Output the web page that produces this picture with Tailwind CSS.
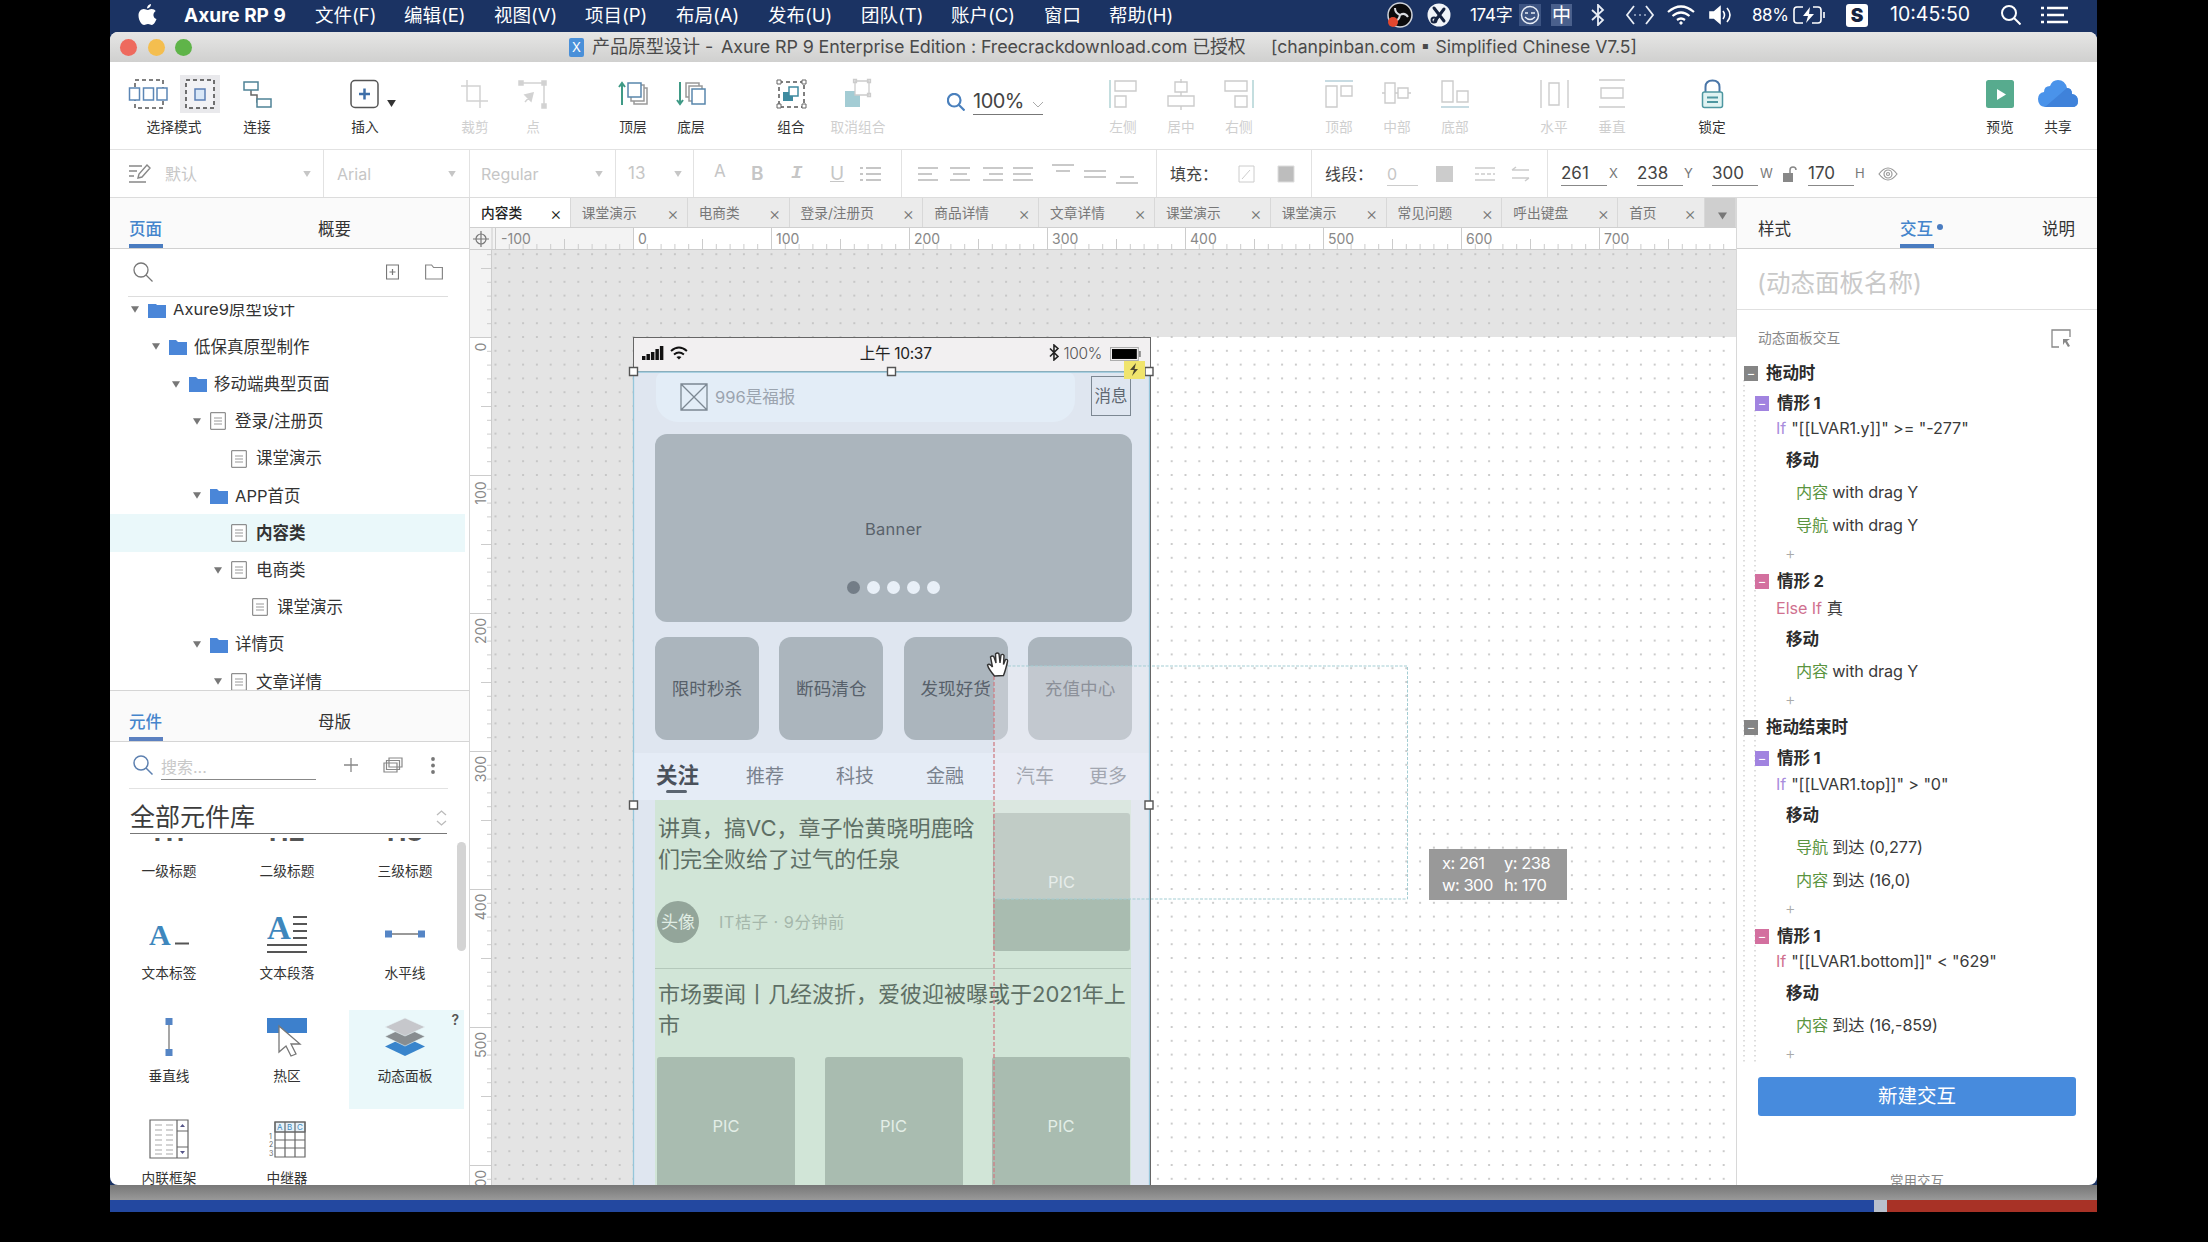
<!DOCTYPE html>
<html lang="zh-CN">

<head>
    <meta charset="UTF-8">
    <meta name="viewport" content="width=device-width, initial-scale=1.0">
    <title>产品原型设计 - Axure RP 9</title>
    <script src="https://cdn.jsdelivr.net/npm/@tailwindcss/browser@4"></script>
</head>

<body class="bg-black w-[2208px] h-[1242px] overflow-hidden font-['Inter','Noto_Sans_CJK_SC',sans-serif] text-[#333]">
    <!-- shared icons -->
    <svg class="hidden">
        <symbol id="folder" viewBox="0 0 18 16">
            <path d="M0 1h7l2 2h9v13H0z" fill="#4a86d8" />
        </symbol>
        <symbol id="page" viewBox="0 0 16 18">
            <path d="M.7.7h14.6v16.6H.7z" fill="#fff" stroke="#777" />
            <path d="M4 6h8M4 9h8M4 12h8" stroke="#999" />
        </symbol>
        <symbol id="caret" viewBox="0 0 10 8">
            <path d="M0 0h10L5 8z" fill="currentColor" />
        </symbol>
        <symbol id="search" viewBox="0 0 20 20" fill="none" stroke="currentColor">
            <circle cx="8" cy="8" r="7" />
            <path d="M13 13l6.5 6.5" />
        </symbol>
    </svg>

    <div class="ml-[110px] w-[1987px] h-[1212px] flex flex-col bg-[#1b3363]">
        <!-- Menu bar -->
        <header class="h-8 pb-[2px] shrink-0 flex items-center text-white text-[18.5px] leading-none whitespace-nowrap">
            <svg class="ml-7 w-[19px] h-[22px]" viewBox="0 0 19 22" fill="#fff">
                <path d="M13 0c.2 2-1.600 4.400-4 4.500C8.800 2.300 10.800.3 13 0zM9.500 6c1 0 2.300-1.200 4.300-1.100 1.700.1 3 .8 3.900 2-3.400 2.200-2.800 6.800.8 8.200-1 2.800-2.700 5.800-4.600 5.900-1.500 0-2-.9-3.900-.9s-2.400.9-3.900.9C3.500 21 .5 16 .5 11.500.5 7.500 3 5.200 5.600 5.100 7.300 5 8.600 6 9.500 6z" />
            </svg>
            <b class="ml-[27px] w-[131px] text-[19px]">Axure RP 9</b>
            <span class="w-[89px]">文件(F)</span>
            <span class="w-[90px]">编辑(E)</span>
            <span class="w-[91px]">视图(V)</span>
            <span class="w-[91px]">项目(P)</span>
            <span class="w-[92px]">布局(A)</span>
            <span class="w-[93px]">发布(U)</span>
            <span class="w-[90px]">团队(T)</span>
            <span class="w-[93px]">账户(C)</span>
            <span class="w-[65px]">窗口</span>
            <span class="w-[278px]">帮助(H)</span>
            <svg class="w-[26px] h-[26px]" viewBox="0 0 26 26">
                <circle cx="13" cy="13" r="12" fill="#0b0b0d" stroke="#cfd3da" stroke-width="1.500" />
                <path d="M8 6q0 5 5 7q5-3 8 2M13 13q-1 6-6 6" fill="none" stroke="#d9dbe0" stroke-width="2" />
                <circle cx="6" cy="20" r="5" fill="#e2472f" />
            </svg>
            <svg class="ml-[14px] w-6 h-6" viewBox="0 0 24 24">
                <circle cx="12" cy="12" r="11.500" fill="#f1f4f8" />
                <path d="M7 5l10 13M17 6L8 18" stroke="#16233f" stroke-width="3" stroke-linecap="round" />
                <circle cx="7" cy="17" r="2.500" fill="none" stroke="#16233f" stroke-width="2" />
            </svg>
            <span class="ml-[19px] w-[49px] text-[17px] tracking-[-0.300px]">174字</span>
            <svg class="w-[22px] h-[22px]" viewBox="0 0 22 22" fill="none" stroke="#e8edf5" stroke-width="1.500">
                <path d="M0 0h22v22H0z" fill="#3d5482" stroke="none" />
                <circle cx="11" cy="11" r="8.500" />
                <path d="M6 9h3M12 9h4M6 13q5 5 10 0" />
            </svg>
            <span class="ml-[10px] w-[21px] h-[22px] bg-[#4a608c] flex items-center justify-center text-[19px]">中</span>
            <svg class="ml-[19px] w-[14px] h-[22px]" viewBox="0 0 14 22" fill="none" stroke="#e8edf5" stroke-width="1.800">
                <path d="M1 6l11 10-5 5V1l5 5L1 16" />
            </svg>
            <svg class="ml-[20px] w-[30px] h-5" viewBox="0 0 30 20" fill="none" stroke="#e8edf5" stroke-width="1.800">
                <path d="M9 1L2 10l7 9M21 1l7 9-7 9" />
                <path d="M9 10h13" stroke-dasharray="2 3" stroke="#7f90b0" />
            </svg>
            <svg class="ml-[12px] w-7 h-5" viewBox="0 0 28 20" fill="none" stroke="#fff" stroke-width="2.200">
                <path d="M1 7q13-11 26 0M5.500 11q8.500-7 17 0M10 15q4-3 8 0" />
                <circle cx="14" cy="18" r="1.200" fill="#fff" stroke-width="1" />
            </svg>
            <svg class="ml-[14px] w-6 h-5" viewBox="0 0 24 20" fill="none" stroke="#fff" stroke-width="1.600">
                <path d="M1 7h4l6-5v16l-6-5H1z" fill="#fff" />
                <path d="M14 6q3 4 0 8M18 3q6 7 0 14" />
            </svg>
            <span class="ml-[19px] w-[41px] text-[17px] tracking-[-0.400px]">88%</span>
            <svg class="w-[33px] h-[18px]" viewBox="0 0 33 18" fill="none" stroke="#fff" stroke-width="1.600">
                <path d="M10 1H4Q1 1 1 4v10q0 3 3 3h6M20 1h5q3 0 3 3v10q0 3-3 3h-6M31 6v6" />
                <path d="M17 1l-7 9h5l-2 7 8-9h-5z" fill="#fff" stroke="none" />
            </svg>
            <span class="ml-[20px] w-[22px] h-[23px] rounded-[3px] bg-white text-[#16233f] font-black flex items-center justify-center text-[19px]">S</span>
            <span class="ml-[22px] w-[111px] text-[19.500px]">10:45:50</span>
            <svg class="w-[20px] h-[20px] stroke-2">
                <use href="#search" />
            </svg>
            <svg class="ml-[20px] w-[27px] h-[18px]" viewBox="0 0 27 18" stroke="#fff" stroke-width="2.400">
                <path d="M0 2h3M6 2h21M0 9h3M6 9h17M0 16h3M6 16h21" />
            </svg>
        </header>

        <!-- Window -->
        <div class="h-[1153px] shrink-0 bg-white rounded-lg overflow-hidden flex flex-col">
            <div class="h-[30px] shrink-0 bg-linear-to-b from-[#e6e6e5] to-[#d0d0cf] flex items-center whitespace-nowrap text-[17.600px] leading-none text-[#4a4a4a]">
                <i class="ml-[10px] size-[17px] rounded-full bg-[#ee6a5e]"></i>
                <i class="ml-[11px] size-[17px] rounded-full bg-[#f4be4f]"></i>
                <i class="ml-[10px] size-[17px] rounded-full bg-[#5fb449]"></i>
                <span class="ml-[377px] w-[15px] h-[19px] bg-[#4a90d9] rounded-[2px] text-white text-[13px] flex items-center justify-center">X</span>
                <span class="ml-[8px] w-[129px] text-[18px]">产品原型设计 -</span>
                <span class="w-[550px] text-[17.900px] tracking-[-0.100px]">Axure RP 9 Enterprise Edition : Freecrackdownload.com 已授权</span>
                <span>[chanpinban.com ▪ Simplified Chinese V7.5]</span>
            </div>

            <!-- Main toolbar -->
            <div class="h-[88px] shrink-0 pl-[18px] pt-[13px] flex border-b border-[#e2e2e2] text-[13.700px] leading-none text-center whitespace-nowrap">
                <div class="w-[92px] flex flex-col items-center">
                    <div class="flex gap-3 w-full">
                        <svg class="w-10 h-[38px]" viewBox="0 0 40 38" fill="none">
                            <path d="M7 5h28v28H7z" stroke="#555" stroke-width="1.500" stroke-dasharray="4 3" />
                            <path d="M1.500 13h10v12h-10zM15.500 13h10v12h-10zM29 13h10v12H29z" fill="#fff" stroke="#5b86b5" stroke-width="1.500" />
                        </svg>
                        <svg class="w-10 h-[38px] bg-[#e9e9ec]" viewBox="0 0 40 38" fill="none">
                            <path d="M6 5h28v28H6z" fill="#f2f2f5" stroke="#444" stroke-width="1.500" stroke-dasharray="4 3" />
                            <path d="M15 14h10v11H15z" fill="#d9e7f7" stroke="#5b7fb5" stroke-width="1.500" />
                        </svg>
                    </div>
                    <span class="mt-2">选择模式</span>
                </div>
                <div class="ml-2 w-[58px] flex flex-col items-center">
                    <svg class="w-10 h-[38px]" viewBox="0 0 40 38" fill="none" stroke-width="1.500">
                        <path d="M14 15v5h6v7h6" stroke="#666" />
                        <path d="M7 7h14v8H7zM20 24h14v8H20z" fill="#fff" stroke="#4f8296" />
                    </svg>
                    <span class="mt-2">连接</span>
                </div>
                <div class="ml-[50px] w-[58px] flex flex-col items-center relative">
                    <svg class="w-10 h-[38px]" viewBox="0 0 40 38" fill="none">
                        <rect x="6" y="5.500" width="27" height="27" rx="4" stroke="#555" stroke-width="1.500" />
                        <path d="M14 19h11M19.500 13.500v11" stroke="#3f6fa8" stroke-width="2.500" />
                    </svg>
                    <svg class="absolute left-[51px] top-[25px] w-[9px] h-[7px] text-[#333]"><use href="#caret" /></svg>
                    <span class="mt-2">插入</span>
                </div>
                <div class="ml-[52px] w-[58px] flex flex-col items-center text-[#cfcfcf]">
                    <svg class="w-10 h-[38px]" viewBox="0 0 40 38" fill="none" stroke="#d2d2d2" stroke-width="1.500">
                        <path d="M6 11h19v22M12 5v21h21" />
                    </svg>
                    <span class="mt-2">裁剪</span>
                </div>
                <div class="w-[58px] flex flex-col items-center text-[#cfcfcf]">
                    <svg class="w-10 h-[38px]" viewBox="0 0 40 38" fill="none" stroke="#d2d2d2" stroke-width="1.500">
                        <path d="M9 8h22v22" />
                        <path d="M6 6h4v4H6zM29 6h4v4h-4zM29 29h4v4h-4zM12 27l8-9M20 18l-8 2 6 6z" fill="#d2d2d2" />
                    </svg>
                    <span class="mt-2">点</span>
                </div>
                <div class="ml-[42px] w-[58px] flex flex-col items-center">
                    <svg class="w-10 h-[38px]" viewBox="0 0 40 38" fill="none" stroke-width="1.500">
                        <path d="M9 30V8M6 12l3-4 3 4" stroke="#3f9a86" stroke-width="2" />
                        <path d="M21 13h13v16H21z" fill="#fff" stroke="#999" />
                        <path d="M18 10h13v16H18z" fill="#fff" stroke="#999" />
                        <path d="M15 8h13v14H15z" fill="#fff" stroke="#5886ac" />
                    </svg>
                    <span class="mt-2">顶层</span>
                </div>
                <div class="w-[58px] flex flex-col items-center">
                    <svg class="w-10 h-[38px]" viewBox="0 0 40 38" fill="none" stroke-width="1.500">
                        <path d="M9 7v22M6 25l3 4 3-4" stroke="#3f9a86" stroke-width="2" />
                        <path d="M15 8h13v14H15z" fill="#fff" stroke="#999" />
                        <path d="M18 11h13v15H18z" fill="#fff" stroke="#999" />
                        <path d="M21 14h13v15H21z" fill="#fff" stroke="#5886ac" />
                    </svg>
                    <span class="mt-2">底层</span>
                </div>
                <div class="ml-[42px] w-[58px] flex flex-col items-center">
                    <svg class="w-10 h-[38px]" viewBox="0 0 40 38" fill="none" stroke-width="1.500">
                        <path d="M8 7h25v25H8z" stroke="#555" stroke-dasharray="4 3" />
                        <path d="M6 5h4v4H6zM31 5h4v4h-4zM6 29h4v4H6zM31 29h4v4h-4z" fill="#fff" stroke="#666" stroke-width="1" />
                        <path d="M12 17h10v9H12z" fill="#3f8ba0" />
                        <path d="M18 12h9v9h-9z" fill="#fff" stroke="#3f8ba0" />
                    </svg>
                    <span class="mt-2">组合</span>
                </div>
                <div class="w-[76px] flex flex-col items-center text-[#cfcfcf]">
                    <svg class="w-10 h-[38px]" viewBox="0 0 40 38" fill="none" stroke-width="1.300">
                        <path d="M7 16h15v16H7z" fill="#a3ccd4" />
                        <path d="M17 6h14v14H17z" fill="#fff" stroke="#ccc" />
                        <path d="M15.500 4.500h3v3h-3zM29.500 4.500h3v3h-3zM29.500 18.500h3v3h-3z" stroke="#ccc" />
                    </svg>
                    <span class="mt-2">取消组合</span>
                </div>
                <div class="ml-[51px] w-[96px] h-[40px] pt-[2px] flex items-end text-[#444]">
                    <svg class="mb-[4px] w-[18px] h-[18px] text-[#4a80bd] stroke-[2.400]"><use href="#search" /></svg>
                    <div class="ml-2 flex-1 h-[27px] flex items-center justify-between border-b border-[#777]">
                        <span class="text-[20px] tracking-[-0.500px]">100%</span>
                        <svg class="mt-2 w-[10px] h-[8px]" viewBox="0 0 10 8" fill="none" stroke="#aaa"><path d="M0 1l5 5 5-5" /></svg>
                    </div>
                </div>
                <div class="ml-[51px] w-[174px] flex text-[#cfcfcf]">
                    <div class="flex-1 flex flex-col items-center">
                        <svg class="w-10 h-[38px]" viewBox="0 0 40 38" fill="none" stroke="#ccc" stroke-width="1.400"><path d="M7 5v28" stroke="#abd0d2" /><path d="M12 6h21v10H12zM12 21h11v11H12z" /></svg>
                        <span class="mt-2">左侧</span>
                    </div>
                    <div class="flex-1 flex flex-col items-center">
                        <svg class="w-10 h-[38px]" viewBox="0 0 40 38" fill="none" stroke="#ccc" stroke-width="1.400"><path d="M20 4v4M20 17v4M20 31v4" /><path d="M14 7h12v10H14zM7 21h26v10H7z" /></svg>
                        <span class="mt-2">居中</span>
                    </div>
                    <div class="flex-1 flex flex-col items-center">
                        <svg class="w-10 h-[38px]" viewBox="0 0 40 38" fill="none" stroke="#ccc" stroke-width="1.400"><path d="M34 5v28" stroke="#abd0d2" /><path d="M6 6h22v10H6zM16 21h12v11H16z" /></svg>
                        <span class="mt-2">右侧</span>
                    </div>
                </div>
                <div class="ml-[42px] w-[174px] flex text-[#cfcfcf]">
                    <div class="flex-1 flex flex-col items-center">
                        <svg class="w-10 h-[38px]" viewBox="0 0 40 38" fill="none" stroke="#ccc" stroke-width="1.400"><path d="M6 6h28" stroke="#b5cfd8" /><path d="M7 11h11v21H7zM22 11h11v10H22z" /></svg>
                        <span class="mt-2">顶部</span>
                    </div>
                    <div class="flex-1 flex flex-col items-center">
                        <svg class="w-10 h-[38px]" viewBox="0 0 40 38" fill="none" stroke="#ccc" stroke-width="1.400"><path d="M5 18h3M18 18h3M31 18h3" /><path d="M8 8h10v20H8zM21 13h10v10H21z" /></svg>
                        <span class="mt-2">中部</span>
                    </div>
                    <div class="flex-1 flex flex-col items-center">
                        <svg class="w-10 h-[38px]" viewBox="0 0 40 38" fill="none" stroke="#ccc" stroke-width="1.400"><path d="M6 32h28" stroke="#b5cfd8" /><path d="M7 6h11v21H7zM22 16h11v11H22z" /></svg>
                        <span class="mt-2">底部</span>
                    </div>
                </div>
                <div class="ml-[41px] w-[116px] flex text-[#cfcfcf]">
                    <div class="flex-1 flex flex-col items-center">
                        <svg class="w-10 h-[38px]" viewBox="0 0 40 38" fill="none" stroke="#ccc" stroke-width="1.400"><path d="M7 5v28M34 5v28M15 8h10v22H15z" /></svg>
                        <span class="mt-2">水平</span>
                    </div>
                    <div class="flex-1 flex flex-col items-center">
                        <svg class="w-10 h-[38px]" viewBox="0 0 40 38" fill="none" stroke="#ccc" stroke-width="1.400"><path d="M7 5h26M7 32h26M9 13h22v10H9z" /></svg>
                        <span class="mt-2">垂直</span>
                    </div>
                </div>
                <div class="ml-[42px] w-[58px] flex flex-col items-center">
                    <svg class="w-10 h-[38px]" viewBox="0 0 40 38" fill="none">
                        <path d="M13.500 17v-5q0-6.500 7-6.500t7 6.500v5" stroke="#4a76a8" stroke-width="2" />
                        <rect x="10.500" y="17" width="20" height="15.500" rx="2" fill="#e0f3f2" stroke="#4d97a0" stroke-width="1.500" />
                        <path d="M15 22.500h11M15 27h11" stroke="#4d97a0" stroke-width="1.800" />
                    </svg>
                    <span class="mt-2">锁定</span>
                </div>
                <div class="ml-[230px] w-[58px] flex flex-col items-center">
                    <svg class="w-10 h-[38px]" viewBox="0 0 40 38">
                        <rect x="6" y="5" width="28" height="28" rx="2.500" fill="#57ab8e" />
                        <path d="M17 14v11l9-5.500z" fill="#fff" />
                    </svg>
                    <span class="mt-2">预览</span>
                </div>
                <div class="w-[58px] flex flex-col items-center">
                    <svg class="w-[44px] h-[38px]" viewBox="0 0 44 38">
                        <path d="M9 32q-7-1-7-8 0-6 6-7 0-6 6-6 2-6 8-6 7 0 9 8 5 0 5 6 6 1 6 7 0 6-6 6z" fill="#4a93ea" />
                        <path d="M9 32L31 13q5 0 5 6 6 1 6 7 0 6-6 6z" fill="#3f82da" />
                    </svg>
                    <span class="mt-2">共享</span>
                </div>
            </div>

            <!-- Format bar -->
            <div class="h-[48px] shrink-0 flex border-b border-[#dcdcdc] text-[16px] leading-none text-[#c6c6c6] whitespace-nowrap">
                <div class="w-[214px] flex items-center border-r border-[#e2e2e2]">
                    <svg class="ml-[19px] w-[22px] h-5" viewBox="0 0 22 20" fill="none" stroke="#888" stroke-width="1.400">
                        <path d="M0 2h13M0 7h8M0 12h5M0 18h17M9 14l1-4 8-9 3 3-8 9z" />
                    </svg>
                    <span class="ml-[14px] w-[138px]">默认</span>
                    <svg class="w-2 h-1.5"><use href="#caret" /></svg>
                </div>
                <div class="w-[146px] flex items-center border-r border-[#e2e2e2]">
                    <span class="ml-[13px] w-[111px]">Arial</span>
                    <svg class="w-2 h-1.5"><use href="#caret" /></svg>
                </div>
                <div class="w-[146px] flex items-center border-r border-[#e2e2e2]">
                    <span class="ml-[11px] w-[114px]">Regular</span>
                    <svg class="w-2 h-1.5"><use href="#caret" /></svg>
                </div>
                <div class="w-[78px] flex items-center border-r border-[#e2e2e2]">
                    <span class="ml-[12px] w-[46px] text-[17px]">13</span>
                    <svg class="w-2 h-1.5"><use href="#caret" /></svg>
                </div>
                <div class="w-[208px] flex items-center border-r border-[#e2e2e2] text-[19px]">
                    <span class="ml-[20px] w-[37px] text-[17px] pb-1">A</span>
                    <b class="w-[40px] font-semibold">B</b>
                    <i class="w-[39px] font-['Liberation_Mono'] font-bold">I</i>
                    <u class="w-[30px]">U</u>
                    <svg class="w-[21px] h-4" viewBox="0 0 21 16" stroke="#c6c6c6" stroke-width="2"><path d="M0 2h3M6 2h15M0 8h3M6 8h15M0 14h3M6 14h15" /></svg>
                </div>
                <div class="w-[255px] flex items-center border-r border-[#e2e2e2]">
                    <svg class="ml-[16px] w-[220px] h-[22px]" viewBox="0 0 220 22" fill="none" stroke="#c9c9c9" stroke-width="1.800">
                        <path d="M0 5h20M0 11h14M0 17h20M32 5h20M35 11h14M32 17h20M65 5h20M71 11h14M65 17h20M95 5h20M95 11h18M95 17h20" />
                        <path d="M134 2h22M138 8h14M166 8h22M166 14h22M202 14h14M198 20h22" />
                    </svg>
                </div>
                <div class="w-[155px] flex items-center border-r border-[#e2e2e2]">
                    <span class="ml-[13px] w-[68px] text-[#444]">填充：</span>
                    <svg class="w-[58px] h-[18px]" viewBox="0 0 58 18"><path d="M1 1h15v16H1zM4 14l8-9" fill="none" stroke="#ccc" /><path d="M40 1h16v16H40z" fill="#bdbdbd" stroke="#ddd" /></svg>
                </div>
                <div class="w-[236px] flex items-center border-r border-[#e2e2e2]">
                    <span class="ml-[13px] w-[62px] text-[#444]">线段：</span>
                    <span class="w-[31px] h-[25px] pt-[5px] border-b border-[#ccc]">0</span>
                    <svg class="ml-[18px] w-[94px] h-[18px]" viewBox="0 0 94 18" stroke="#ccc" stroke-width="1.500"><path d="M0 1h17v16H0z" fill="#ccc" stroke="none" /><path d="M39 3h20M39 15h20" /><path d="M39 9h20" stroke-dasharray="4 2" /><path d="M76 5h17M76 5l4-3M76 13h17M93 13l-4 3" /></svg>
                </div>
                <div class="flex items-center text-[#444] text-[17px]">
                    <span class="ml-[13px] w-[46px] h-[25px] pt-1 border-b border-[#888]">261</span>
                    <span class="ml-[2px] w-[28px] text-[13px] text-[#777]">X</span>
                    <span class="w-[46px] h-[25px] pt-1 border-b border-[#888]">238</span>
                    <span class="ml-[1px] w-[28px] text-[13px] text-[#777]">Y</span>
                    <span class="w-[46px] h-[25px] pt-1 border-b border-[#888]">300</span>
                    <span class="ml-[2px] w-[23px] text-[13px] text-[#777]">W</span>
                    <svg class="w-[14px] h-4" viewBox="0 0 14 16" fill="none" stroke="#888" stroke-width="1.500"><path d="M0 7h10v9H0z" fill="#888" stroke="none" /><path d="M7 7V4q0-3 3-3t3 3" /></svg>
                    <span class="ml-[11px] w-[46px] h-[25px] pt-1 border-b border-[#888]">170</span>
                    <span class="ml-[1px] w-[23px] text-[13px] text-[#777]">H</span>
                    <svg class="w-5 h-[14px]" viewBox="0 0 20 14" fill="none" stroke="#999" stroke-width="1.200"><path d="M1 7q9-12 18 0-9 12-18 0z" /><circle cx="10" cy="7" r="4" /><circle cx="10" cy="7" r="1.500" /></svg>
                </div>
            </div>

            <div class="flex flex-1 min-h-0">
                <!-- Left panels -->
                <aside class="w-[360px] shrink-0 flex flex-col border-r border-[#d8d8d8] leading-none">
                    <div class="h-[51px] shrink-0 flex pl-[19px] bg-[#fafafa] border-b border-[#d0d0d0] text-[16.500px]">
                        <span class="w-[34px] pt-[23px] border-b-4 border-[#4a7cc0] text-[#4585cc] font-medium">页面</span>
                        <span class="ml-[155px] pt-[23px]">概要</span>
                    </div>
                    <div class="h-[48px] pb-[2px] shrink-0 ml-[18px] w-[320px] flex items-center border-b border-[#ddd] text-[#777]">
                        <svg class="ml-[5px] w-5 h-5 stroke-[1.300]"><use href="#search" /></svg>
                        <svg class="ml-[233px] w-[13px] h-4" viewBox="0 0 13 16" fill="none" stroke="#777" stroke-width="1.200"><path d="M.5 1h12v14H.5zM3.500 8h6M6.500 5v6" /></svg>
                        <svg class="ml-[26px] w-[18px] h-4" viewBox="0 0 18 16" fill="none" stroke="#888" stroke-width="1.200"><path d="M.6 1h6l2 2.500h8.800V15H.6z" /></svg>
                    </div>
                    <div class="mt-[7px] flex-1 min-h-0 overflow-hidden text-[16.500px] [&>div]:h-[37.240px] [&>div]:flex [&>div]:items-center [&_.c]:w-2 [&_.c]:h-[7px] [&_.c]:mr-[13px] [&_.c]:text-[#777] [&_.f]:w-[18px] [&_.f]:h-4 [&_.f]:mr-[7px] [&_.p]:w-4 [&_.p]:h-[18px] [&_.p]:mr-[9px]">
                        <div class="pl-[21px] -mt-[13px]"><svg class="c"><use href="#caret" /></svg><svg class="f -ml-1"><use href="#folder" /></svg>Axure9原型设计</div>
                        <div class="pl-[42px]"><svg class="c"><use href="#caret" /></svg><svg class="f -ml-1"><use href="#folder" /></svg>低保真原型制作</div>
                        <div class="pl-[62px]"><svg class="c"><use href="#caret" /></svg><svg class="f -ml-1"><use href="#folder" /></svg>移动端典型页面</div>
                        <div class="pl-[83px]"><svg class="c"><use href="#caret" /></svg><svg class="p -ml-1"><use href="#page" /></svg>登录/注册页</div>
                        <div class="pl-[121px]"><svg class="p"><use href="#page" /></svg>课堂演示</div>
                        <div class="pl-[83px]"><svg class="c"><use href="#caret" /></svg><svg class="f -ml-1"><use href="#folder" /></svg>APP首页</div>
                        <div class="pl-[121px] mr-[4px] bg-[#eaf8fa] font-bold"><svg class="p"><use href="#page" /></svg>内容类</div>
                        <div class="pl-[104px]"><svg class="c"><use href="#caret" /></svg><svg class="p -ml-1"><use href="#page" /></svg>电商类</div>
                        <div class="pl-[142px]"><svg class="p"><use href="#page" /></svg>课堂演示</div>
                        <div class="pl-[83px]"><svg class="c"><use href="#caret" /></svg><svg class="f -ml-1"><use href="#folder" /></svg>详情页</div>
                        <div class="pl-[104px]"><svg class="c"><use href="#caret" /></svg><svg class="p -ml-1"><use href="#page" /></svg>文章详情</div>
                    </div>
                    <div class="h-[52px] shrink-0 flex pl-[19px] bg-[#fafafa] border-y border-[#d5d5d5] text-[16.500px]">
                        <span class="w-[34px] pt-[23px] border-b-4 border-[#5b80c0] text-[#4585cc] font-medium">元件</span>
                        <span class="ml-[155px] pt-[23px]">母版</span>
                    </div>
                    <div class="h-[47px] shrink-0 ml-[19px] w-[319px] flex items-center border-b border-[#e2e2e2] text-[#5d80b0]">
                        <svg class="ml-1 w-5 h-5 stroke-[1.500]"><use href="#search" /></svg>
                        <span class="ml-2 mt-1 w-[155px] h-[26px] pt-[5px] border-b border-[#888] text-[16px] text-[#c8c8c8]">搜索...</span>
                        <svg class="ml-[28px] w-[14px] h-[14px]" viewBox="0 0 14 14" stroke="#888" stroke-width="1.300"><path d="M0 7h14M7 0v14" /></svg>
                        <svg class="ml-[25px] w-5 h-4" viewBox="0 0 20 16" fill="#fff" stroke="#888" stroke-width="1.200"><path d="M6 1h13v9H6zM3.500 3.500h13v9h-13zM1 6h13v9H1z" /></svg>
                        <svg class="ml-[28px] w-1 h-[17px]" viewBox="0 0 4 17" fill="#777"><circle cx="2" cy="2" r="1.900" /><circle cx="2" cy="8.500" r="1.900" /><circle cx="2" cy="15" r="1.900" /></svg>
                    </div>
                    <div class="h-[45px] shrink-0 ml-[20px] w-[317px] pt-[13px] flex items-center justify-between border-b border-[#777] text-[25px] text-[#3c3c3c]">
                        全部元件库
                        <svg class="w-[11px] h-[18px]" viewBox="0 0 11 18" fill="none" stroke="#bbb" stroke-width="1.300"><path d="M1 6l4.500-4L10 6M1 12l4.500 4L10 12" /></svg>
                    </div>
                    <div class="relative mt-[4px] h-[347px] shrink-0 overflow-hidden">
                        <div class="-mt-[36px] w-[354px] grid grid-cols-3 auto-rows-[102.300px] text-[13.700px] [&>div]:pt-[10px] [&>div]:flex [&>div]:flex-col [&>div]:items-center [&_svg]:w-10 [&_svg]:h-[40px] [&_span]:mt-[13px] [&_b]:text-[#555]">
                            <div><b class="h-[40px] pt-[7px] text-[26px] leading-none">H1</b><span>一级标题</span></div>
                            <div><b class="h-[40px] pt-[7px] text-[26px] leading-none">H2</b><span>二级标题</span></div>
                            <div><b class="h-[40px] pt-[7px] text-[26px] leading-none">H3</b><span>三级标题</span></div>
                            <div>
                                <svg viewBox="0 0 40 40"><text x="0" y="31" font-family="Liberation Serif" font-weight="bold" font-size="30" fill="#3e87bd">A</text><path d="M26 29.500h14" stroke="#555" stroke-width="2" /></svg>
                                <span>文本标签</span>
                            </div>
                            <div>
                                <svg viewBox="0 0 40 40"><text x="0" y="25" font-family="Liberation Serif" font-weight="bold" font-size="33" fill="#3e87bd">A</text><path d="M26 3h14M26 10h14M26 17h14M26 24h14M0 31h40M0 38h40" stroke="#555" stroke-width="2" /></svg>
                                <span>文本段落</span>
                            </div>
                            <div>
                                <svg viewBox="0 0 40 40"><path d="M3 20h34" stroke="#777" stroke-width="1.300" /><path d="M0 16.500h7v7H0zM33 16.500h7v7h-7z" fill="#5585c5" /></svg>
                                <span>水平线</span>
                            </div>
                            <div>
                                <svg viewBox="0 0 40 40"><path d="M20 3v34" stroke="#777" stroke-width="1.300" /><path d="M16.500 1h7v7h-7zM16.500 32h7v7h-7z" fill="#5585c5" /></svg>
                                <span>垂直线</span>
                            </div>
                            <div>
                                <svg viewBox="0 0 40 40"><path d="M0 1h40v15H0z" fill="#3d80cc" /><path d="M12 9v26l7-6 5 10 5-2-5-10h9z" fill="#fff" stroke="#777" stroke-width="1.300" /></svg>
                                <span>热区</span>
                            </div>
                            <div class="relative">
                                <div class="absolute left-[3px] top-[3px] right-0 bottom-0 bg-[#eaf8fa]"></div>
                                <b class="absolute right-[5px] top-[6px] text-[14px] font-semibold">?</b>
                                <svg class="relative" viewBox="0 0 40 40"><path d="M20 20l20 9.500L20 39 0 29.500z" fill="#3985cc" /><path d="M20 10l20 9.500L20 29 0 19.500z" fill="#888d90" stroke="#eaf7f9" stroke-width=".6" /><path d="M20 1l20 9L20 19 0 10z" fill="#c6c7cb" stroke="#eaf7f9" stroke-width=".6" /></svg>
                                <span class="relative">动态面板</span>
                            </div>
                            <div>
                                <svg viewBox="0 0 40 40" fill="none" stroke="#666" stroke-width="1.200"><path d="M1 1h38v38H1zM28 1v38M28 12h11M28 28h11" /><path d="M6 6h7M6 11h7M6 16h7M6 21h7M6 26h7M6 31h7M6 35h7M17 6h7M17 11h7M17 16h7M17 21h7M17 26h7M17 31h7M17 35h7" stroke="#aaa" /><path d="M31 8l2.500-3L36 8zM31 32l2.500 3 2.500-3z" fill="#558" stroke="none" /></svg>
                                <span>内联框架</span>
                            </div>
                            <div>
                                <svg viewBox="0 0 40 40" fill="none" stroke="#666" stroke-width="1.200"><path d="M8 3h30v10H8z" fill="#e6f1f8" /><path d="M8 3h30v35H8zM18 3v35M28 3v35M8 13h30M8 21h30M8 29h30" /><g font-size="8" fill="#3e87bd" stroke="none"><text x="10" y="11">A</text><text x="20" y="11">B</text><text x="30" y="11">C</text></g><g font-size="7" fill="#666" stroke="none"><text x="2" y="20">1</text><text x="2" y="28">2</text><text x="2" y="37">3</text></g></svg>
                                <span>中继器</span>
                            </div>
                        </div>
                        <div class="absolute left-[347px] top-1 w-[9px] h-[109px] rounded-full bg-[#d4d4d4]"></div>
                    </div>
                </aside>

                <!-- Editor -->
                <main class="w-[1267px] shrink-0 flex flex-col border-r border-[#d8d8d8]">
                    <div class="h-[30px] shrink-0 flex bg-[#ebebeb] border-b border-[#cfcfcf] text-[13.700px] leading-none text-[#777] whitespace-nowrap [&>div]:pt-[2px] [&>div]:flex [&>div]:items-center [&>div]:justify-between [&>div]:pl-[11px] [&>div]:pr-[8px] [&>div]:border-r [&>div]:border-[#d8d8d8] [&_i]:not-italic [&_i]:text-[18px] [&_i]:font-light">
                        <div class="w-[101px] bg-white text-[#222] font-medium">内容类<i>×</i></div>
                        <div class="w-[117px]">课堂演示<i>×</i></div>
                        <div class="w-[102px]">电商类<i>×</i></div>
                        <div class="w-[134px]">登录/注册页<i>×</i></div>
                        <div class="w-[116px]">商品详情<i>×</i></div>
                        <div class="w-[116px]">文章详情<i>×</i></div>
                        <div class="w-[116px]">课堂演示<i>×</i></div>
                        <div class="w-[116px]">课堂演示<i>×</i></div>
                        <div class="w-[116px]">常见问题<i>×</i></div>
                        <div class="w-[116px]">呼出键盘<i>×</i></div>
                        <div class="w-[87px]">首页<i>×</i></div>
                        <div class="flex-1 bg-[#cfcfcf]"><svg class="w-[9px] h-[8px] ml-0.5 mt-1"><use href="#caret" /></svg></div>
                    </div>
                    <svg class="w-[1266px] h-[22px] shrink-0" viewBox="0 0 1266 22">
                        <pattern id="hr" x="163" width="138" height="22" patternUnits="userSpaceOnUse">
                            <path d="M.5 0v22M69.500 11v11M14.300 16v6M28.100 16v6M41.900 16v6M55.700 16v6M83.300 16v6M97.100 16v6M110.900 16v6M124.700 16v6" stroke="#ccc" />
                        </pattern>
                        <path d="M0 0h163v22H0z" fill="#f3f3f3" />
                        <path d="M22 0h1244v22H22z" fill="url(#hr)" />
                        <path d="M22 0v22M0 21.500h1266" stroke="#ccc" />
                        <g fill="none" stroke="#777" stroke-width="1.200"><circle cx="11" cy="11" r="5" /><path d="M11 3v16M3 11h16" /></g>
                        <g font-size="14" fill="#888" id="hl"></g>
                    </svg>
                    <div class="flex flex-1 min-h-0">
                        <svg class="w-[22px] h-[936px] shrink-0" viewBox="0 0 22 936">
                            <pattern id="vr" y="87" width="22" height="138" patternUnits="userSpaceOnUse">
                                <path d="M0 .5h22M11 69.500h11M17 14.300h5M17 28.100h5M17 41.900h5M17 55.700h5M17 83.300h5M17 97.100h5M17 110.900h5M17 124.700h5" stroke="#ccc" />
                            </pattern>
                            <path d="M0 0h22v87H0z" fill="#f3f3f3" />
                            <path d="M0 0h22v936H0z" fill="url(#vr)" />
                            <path d="M21.500 0v936" stroke="#ccc" />
                            <g font-size="14" fill="#888" id="vl"></g>
                        </svg>

                        <!-- Canvas, free placement -->
                        <div class="relative flex-1 overflow-hidden bg-white">
                            <svg class="absolute inset-0 w-[1245px] h-[936px]">
                                <pattern id="dots" x="134.600" y="80.100" width="13.800" height="13.800" patternUnits="userSpaceOnUse">
                                    <circle cx="6.900" cy="6.900" r="1.100" fill="#c0c0c0" />
                                </pattern>
                                <path d="M0 0h1245v87H142v849H0z" fill="#e4e4e4" />
                                <path d="M0 0h1245v936H0z" fill="url(#dots)" />
                            </svg>

                            <div class="absolute left-[141px] top-[87px] w-[518px] h-[860px] outline -outline-offset-1 outline-[#666] bg-[#dfe6f0] leading-none">
                                <div class="h-[35px] px-[9px] pb-[6px] flex items-end bg-[#f2f0f1] text-[15.500px] text-[#222] outline -outline-offset-1 outline-[#666]">
                                    <svg class="w-[22px] h-[14px] mb-[6px]" viewBox="0 0 22 14"><path d="M0 10h3.500v4H0zM4.500 8H8v6H4.500zM9 6h3.500v8H9zM13.500 3H17v11h-3.500zM18 0h3.500v14H18z" fill="#111" /></svg>
                                    <svg class="ml-1.5 w-[18px] h-[14px] mb-[6px]" viewBox="0 0 18 14" fill="none" stroke="#111" stroke-width="2"><path d="M1 5q8-7 16 0M4 8.500q5-4 10 0" /><path d="M6.500 11q2.500-1.500 5 0L9 13.500z" fill="#111" stroke="none" /></svg>
                                    <span class="ml-[172px] w-[190px] mb-[5px] tracking-[-0.300px]">上午 10:37</span>
                                    <svg class="w-[11px] h-[17px] mb-[5px]" viewBox="0 0 11 17" fill="none" stroke="#222" stroke-width="1.600"><path d="M1 4.500l8 8-4 3.500V1l4 3.500-8 8" /></svg>
                                    <span class="ml-1 w-[47px] mb-[5px] text-[#555] font-light tracking-[-0.300px]">100%</span>
                                    <svg class="w-[32px] h-[14px] mb-[5px]" viewBox="0 0 32 14"><rect x=".5" y=".5" width="28" height="13" fill="none" stroke="#aaa" /><path d="M2 2h25v10H2z" fill="#000" /><path d="M30 4v6" stroke="#888" stroke-width="2" /></svg>
                                </div>
                                <div class="ml-[23px] w-[419px] h-[50px] rounded-b-[22px] rounded-t-lg bg-[#e3edf7] flex items-center pl-[24px] text-[16.500px] text-[#9ba4af]">
                                    <svg class="w-7 h-7" viewBox="0 0 28 28" fill="none" stroke="#7c8792" stroke-width="1.300"><path d="M1 1h26v26H1zM1 1l26 26M27 1L1 27" /></svg>
                                    <span class="ml-[7px]">996是福报</span>
                                </div>
                                <div class="absolute left-[458px] top-[39px] w-[40px] h-[40px] border border-[#7c8792] flex items-center justify-center text-[16.500px] text-[#5f6872]">消息</div>
                                <div class="absolute left-[22px] top-[97px] w-[477px] h-[188px] rounded-[12px] bg-[#abb5bd] flex flex-col items-center text-[16.500px] text-[#59626b]">
                                    <span class="mt-[87px] tracking-[0.300px]">Banner</span>
                                    <div class="mt-[43px] flex gap-[6.500px]">
                                        <i class="size-[13.500px] rounded-full bg-[#737d87]"></i>
                                        <i class="size-[13.500px] rounded-full bg-[#e8eff7]"></i>
                                        <i class="size-[13.500px] rounded-full bg-[#e8eff7]"></i>
                                        <i class="size-[13.500px] rounded-full bg-[#e8eff7]"></i>
                                        <i class="size-[13.500px] rounded-full bg-[#e8eff7]"></i>
                                    </div>
                                </div>
                                <div class="absolute left-[22px] top-[300px] w-[477px] h-[103px] grid grid-cols-4 gap-[20.500px] text-[17.600px] text-[#57606a] [&>div]:rounded-[12px] [&>div]:bg-[#abb5bd] [&>div]:flex [&>div]:items-center [&>div]:justify-center">
                                    <div>限时秒杀</div>
                                    <div>断码清仓</div>
                                    <div>发现好货</div>
                                    <div>充值中心</div>
                                </div>
                                <div class="absolute left-px right-px top-[416px] h-[47px] pb-px pl-[22px] bg-[#e5ecf6] flex items-center text-[19px] text-[#7a828e]">
                                    <b class="relative w-[90px] text-[21.500px] text-[#4a515b]">关注<i class="absolute left-[10px] top-[25px] w-[21px] h-[3px] rounded bg-[#5a6470]"></i></b>
                                    <span class="w-[90px]">推荐</span>
                                    <span class="w-[90px]">科技</span>
                                    <span class="w-[90px]">金融</span>
                                    <span class="w-[73px]">汽车</span>
                                    <span>更多</span>
                                </div>
                                <!-- feed -->
                                <div class="absolute left-[22px] top-[463px] w-[476px] h-[400px] bg-[#d1e5d7] text-[22px] leading-[30.500px] text-[#5e6f65]">
                                    <p class="absolute left-[3px] top-[13px] w-[330px] whitespace-nowrap">讲真，搞VC，章子怡黄晓明鹿晗<br>们完全败给了过气的任泉</p>
                                    <div class="absolute left-[2px] top-[101px] size-[42px] rounded-full bg-[#93a59a] flex items-center justify-center text-[17px] text-[#e0ede4]">头像</div>
                                    <p class="absolute left-[64px] top-[107px] text-[16.300px] tracking-[0.500px] text-[#a5b7ab]">IT桔子 · 9分钟前</p>
                                    <div class="absolute left-[338px] top-[13px] w-[137px] h-[138px] rounded-[3px] bg-[#a9bcb0] flex items-center justify-center text-[16.500px] text-[#e3eee7]">PIC</div>
                                    <div class="absolute left-0 right-0 top-[168px] h-px bg-[#b4c8bb]"></div>
                                    <p class="absolute left-[3px] top-[179px] whitespace-nowrap">市场要闻丨几经波折，爱彼迎被曝或于2021年上<br>市</p>
                                    <div class="absolute left-[2px] top-[257px] w-[473px] h-[138px] flex justify-between text-[16.500px] text-[#e3eee7] [&>div]:w-[138px] [&>div]:rounded-[3px] [&>div]:bg-[#a9bcb0] [&>div]:flex [&>div]:items-center [&>div]:justify-center">
                                        <div>PIC</div>
                                        <div>PIC</div>
                                        <div>PIC</div>
                                    </div>
                                </div>
                            </div>

                            <!-- drag ghost, guides and selection -->
                            <div class="absolute left-[502px] top-[416px] w-[156px] h-[233px] bg-[#eeeaf0]/35"></div>
                            <svg class="absolute inset-0 w-[1245px] h-[936px]" fill="none">
                                <path d="M502.500 416H915.500V649H502.500" stroke="#a3cdd3" stroke-dasharray="3 1.500" />
                                <path d="M502 426V936" stroke="#cf7f86" stroke-dasharray="4 2" stroke-width="1.300" />
                                <path d="M141.500 936V122H657.500V936" stroke="#95c6da" stroke-width="1.300" />
                                <path d="M658.500 87V936" stroke="#666" />
                                <g fill="#fff" stroke="#555" stroke-width="1.400">
                                    <path d="M137.500 117.500h8v8h-8zM395.500 117.500h8v8h-8zM653 117.500h8v8h-8zM137.500 551h8v8h-8zM653 551h8v8h-8z" />
                                </g>
                                <path d="M632 111h21v18h-21z" fill="#f0e46c" />
                                <path d="M644 113l-6 7h4l-2 6 6-7h-3.500z" fill="#4b4730" />
                                <path d="M502.500 426q-6-7-7-11 2-2 5 2l-2-10q2-2 3.500 0l2 6-.5-9q2-2 3.500 0l1 9 1-8q2-1.500 3 .5l-.5 9 2-5q2.500-.5 2 2-2 9-4 14z" fill="#fff" stroke="#333" stroke-width="1.400" />
                            </svg>
                            <div class="absolute left-[937px] top-[599px] w-[138px] h-[51px] bg-[#999] pl-[13px] py-[4px] grid grid-cols-[62px_1fr] text-white text-[16.500px] leading-[21.500px] tracking-[-0.500px] whitespace-nowrap">
                                <span>x: 261</span><span>y: 238</span>
                                <span>w: 300</span><span>h: 170</span>
                            </div>
                        </div>
                    </div>
                </main>

                <!-- Interactions -->
                <aside class="relative flex-1 flex flex-col leading-none overflow-hidden whitespace-nowrap">
                    <div class="h-[51px] shrink-0 flex pl-[21px] bg-[#fafafa] border-b border-[#d0d0d0] text-[16.500px]">
                        <span class="w-[142px] pt-[23px]">样式</span>
                        <span class="w-[34px] pt-[23px] border-b-4 border-[#4a7cc0] text-[#4585cc] font-medium">交互</span>
                        <i class="mt-[26px] ml-[3px] size-[6px] rounded-full bg-[#4a7cc0]"></i>
                        <span class="ml-[99px] pt-[23px]">说明</span>
                    </div>
                    <div class="h-[61px] shrink-0 pl-[20px] pt-[9px] flex items-center border-b border-[#e0e0e0] text-[24.500px] text-[#c9c9c9]">(动态面板名称)</div>
                    <div class="mt-[19px] px-[21px] pr-[26px] h-5 flex items-center justify-between text-[13.700px] text-[#888]">
                        动态面板交互
                        <svg class="w-5 h-[19px]" viewBox="0 0 20 19" fill="none" stroke="#888" stroke-width="1.300"><path d="M8 18H1V1h18v7" /><path d="M12 10h7l-3 2 3 5-2 1-3-5-2 3z" fill="#888" stroke="none" /></svg>
                    </div>
                    <svg class="absolute left-[6px] top-[182px] w-4 h-[682px]" stroke="#bbb" stroke-dasharray="1.500 3.500"><path d="M1 0v682M12 30v682" /></svg>
                    <div class="relative mt-[15px] text-[16.200px] tracking-[-0.100px] text-[#3a3a3a] [&>div]:h-5 [&>div]:flex [&>div]:items-center [&_b]:text-[16.500px] [&_b]:text-[#2c2c2c] [&_i]:w-[14px] [&_i]:h-[15px] [&_i]:mr-2 [&_i]:text-white [&_i]:not-italic [&_i]:flex [&_i]:items-center [&_i]:justify-center [&_i]:text-[13px] [&_em]:not-italic [&_em]:text-[#5a9440] [&_em]:mr-[4px] [&_s]:no-underline [&_s]:mr-[5px]">
                        <div class="pl-[7px]"><i class="bg-[#858585]">−</i><b>拖动时</b></div>
                        <div class="pl-[18px] mt-[10px]"><i class="bg-[#a183e0]">−</i><b>情形 1</b></div>
                        <div class="pl-[39px] mt-[5px]"><s class="text-[#a98ddc]">If</s>"[[LVAR1.y]]" &gt;= "-277"</div>
                        <div class="pl-[49px] mt-3"><b>移动</b></div>
                        <div class="pl-[59px] mt-3"><em>内容</em>with drag Y</div>
                        <div class="pl-[59px] mt-[13px]"><em>导航</em>with drag Y</div>
                        <div class="pl-[48px] mt-2 text-[#aaa] font-light">+</div>
                        <div class="pl-[18px] mt-2"><i class="bg-[#d3709f]">−</i><b>情形 2</b></div>
                        <div class="pl-[39px] mt-[7px]"><s class="text-[#d0718f]">Else If</s>真</div>
                        <div class="pl-[49px] mt-[11px]"><b>移动</b></div>
                        <div class="pl-[59px] mt-3"><em>内容</em>with drag Y</div>
                        <div class="pl-[48px] mt-2 text-[#aaa] font-light">+</div>
                        <div class="pl-[7px] mt-2"><i class="bg-[#858585]">−</i><b>拖动结束时</b></div>
                        <div class="pl-[18px] mt-[11px]"><i class="bg-[#a183e0]">−</i><b>情形 1</b></div>
                        <div class="pl-[39px] mt-[6px]"><s class="text-[#a98ddc]">If</s>"[[LVAR1.top]]" &gt; "0"</div>
                        <div class="pl-[49px] mt-[11px]"><b>移动</b></div>
                        <div class="pl-[59px] mt-3"><em>导航</em>到达 (0,277)</div>
                        <div class="pl-[59px] mt-[13px]"><em>内容</em>到达 (16,0)</div>
                        <div class="pl-[48px] mt-2 text-[#aaa] font-light">+</div>
                        <div class="pl-[18px] mt-2"><i class="bg-[#d3709f]">−</i><b>情形 1</b></div>
                        <div class="pl-[39px] mt-[5px]"><s class="text-[#d0718f]">If</s>"[[LVAR1.bottom]]" &lt; "629"</div>
                        <div class="pl-[49px] mt-3"><b>移动</b></div>
                        <div class="pl-[59px] mt-3"><em>内容</em>到达 (16,-859)</div>
                        <div class="pl-[48px] mt-2 text-[#aaa] font-light">+</div>
                    </div>
                    <button class="mt-[14px] ml-[21px] w-[318px] h-[39px] shrink-0 rounded-[3px] bg-[#478bdd] text-white text-[19.500px]">新建交互</button>
                    <div class="mt-[59px] text-center text-[13.500px] text-[#888]">常用交互</div>
                </aside>
            </div>
        </div>

        <!-- Desktop strip under the window -->
        <div class="h-[15px] shrink-0 bg-linear-to-b from-[#777] to-[#999]"></div>
        <div class="h-3 shrink-0 flex bg-[#b9c0cc]">
            <div class="w-[1764px] bg-[#2348a0]"></div>
            <div class="ml-[13px] flex-1 bg-[#a83226]"></div>
        </div>
    </div>

    <script>
        // ruler labels, one per 100 units
        const label = (v, attrs) => `<text ${attrs}>${v}</text>`;
        let h = '', v = '';
        for (let i = -1; i < 8; i++) {
            h += label(i * 100, `x="${i < 0 ? 31 : 168 + i * 138}" y="16"`);
        }
        for (let i = 0; i < 7; i++) {
            const y = 87 + i * 138 + (i ? 18 : 10);
            v += label(i * 100, `transform="translate(15.5 ${y}) rotate(-90)" text-anchor="middle"`);
        }
        document.getElementById('hl').innerHTML = h;
        document.getElementById('vl').innerHTML = v;
    </script>
</body>

</html>
